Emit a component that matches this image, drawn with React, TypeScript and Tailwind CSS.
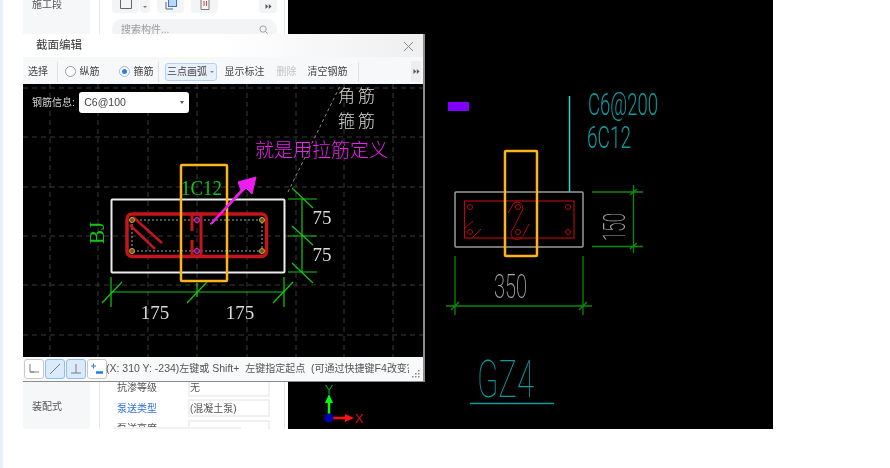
const CJK = "font-['Liberation_Sans','Noto_Sans_CJK_SC',sans-serif]";

function Chevrons() {
  return (
    <svg width="7" height="7" viewBox="0 0 7 7" fill="#555">
      <path d="M0.5 1 L3.2 3.5 L0.5 6 Z" />
      <path d="M3.8 1 L6.5 3.5 L3.8 6 Z" />
    </svg>
  );
}

function Radio({ checked, label }: { checked?: boolean; label: string }) {
  return (
    <div className="flex items-center gap-[3.5px]">
      <div className={`w-[11px] h-[11px] rounded-full border flex items-center justify-center bg-white ${checked ? "border-[#9dbbe0]" : "border-[#9a9a9a]"}`}>
        {checked && <div className="w-[5px] h-[5px] rounded-full bg-[#2f7de1]" />}
      </div>
      <span>{label}</span>
    </div>
  );
}

function Sep() {
  return <div className="w-px h-[20px] bg-[#dfe1e4]" />;
}

function GridLines({ xs, ys, x0, x1, y0, y1 }: { xs: number[]; ys: number[]; x0: number; x1: number; y0: number; y1: number }) {
  return (
    <g stroke="#3a3a3a" strokeWidth="1" strokeDasharray="5 4">
      {xs.map((x) => <line key={"x" + x} x1={x} x2={x} y1={y0} y2={y1} />)}
      {ys.map((y) => <line key={"y" + y} y1={y} y2={y} x1={x0} x2={x1} />)}
    </g>
  );
}

function DialogDrawing() {
  return (
    <svg className="absolute inset-0" width="401" height="273" viewBox="23 84 401 273">
      <GridLines xs={[50, 98, 148, 197, 247, 296, 344, 393]} ys={[88, 137, 187, 236, 285, 335]} x0={23} x1={424} y0={84} y1={357} />
      <line x1="288" y1="192" x2="340" y2="86" stroke="#8a8a8a" strokeDasharray="3 3" />
      <text x="338" y="102" fontSize="17" fill="#d8d8d8" letterSpacing="3" fontFamily="'Noto Sans CJK SC'" fontWeight="300">角筋</text>
      <text x="338" y="127" fontSize="17" fill="#d8d8d8" letterSpacing="3" fontFamily="'Noto Sans CJK SC'" fontWeight="300">箍筋</text>
      <text x="255" y="157" fontSize="19" fill="#f01ef0" fontFamily="'Noto Sans CJK SC'" fontWeight="300">就是用拉筋定义</text>

      <rect x="111.5" y="199.5" width="173" height="73" rx="1" fill="none" stroke="#ececec" strokeWidth="2" />
      <rect x="127" y="214" width="139.5" height="42.5" rx="5" fill="none" stroke="#c4141c" strokeWidth="3.5" />
      <rect x="132" y="220" width="130" height="31" fill="none" stroke="#9aa7b5" strokeWidth="1" strokeDasharray="2 2" />
      <line x1="133" y1="217" x2="162" y2="243" stroke="#c4141c" strokeWidth="2.5" />
      <line x1="130" y1="225" x2="155" y2="249" stroke="#c4141c" strokeWidth="2.5" />
      <path d="M192 213 V231 M192 240 V257 M201 213 V257" fill="none" stroke="#c4141c" strokeWidth="3" />
      <path d="M192 214 H201 M192 256 H201" fill="none" stroke="#c4141c" strokeWidth="3" />
      {[[132, 220], [262, 220], [132, 251], [262, 251]].map(([x, y]) => (
        <circle key={`${x}-${y}`} cx={x} cy={y} r="2.5" fill="#6b5a10" stroke="#c9a93a" strokeWidth="1" />
      ))}
      {[[197, 220], [197, 251]].map(([x, y]) => (
        <circle key={`${x}-${y}`} cx={x} cy={y} r="2.5" fill="#5a1060" stroke="#c040c0" strokeWidth="1" />
      ))}

      <text x="181" y="195" fontSize="21" fill="#12c812" fontFamily="'Liberation Serif'" textLength="41" lengthAdjust="spacingAndGlyphs">1C12</text>
      <rect x="181" y="165" width="46" height="116" rx="1" fill="none" stroke="#fdb515" strokeWidth="2.5" />
      <polygon points="210,224 241,190 238,182 256,177 252,194 246,188 212,224" fill="#ee1cee" stroke="#ee1cee" strokeWidth="1" strokeLinejoin="round" />

      <text transform="translate(104 233) rotate(-90)" textAnchor="middle" fontSize="21" fill="#12c812" fontFamily="'Liberation Serif'">BJ</text>

      <g stroke="#14c814" strokeWidth="1.2" fill="none">
        <path d="M111 277 V307 M197 283 V297 M284 277 V307 M111 292 H284" />
        <path d="M102 303 L122 282 M187 303 L207 282 M273 303 L293 282" />
        <path d="M302 199 V273 M288 199 H317 M288 236 H317 M288 272 H317" />
        <path d="M292 188 L313 208 M292 226 L313 245 M292 263 L313 283" />
      </g>
      <g fontSize="19" fill="#dcdcdc" fontFamily="'Liberation Serif'" textAnchor="middle">
        <text x="155" y="319">175</text>
        <text x="240" y="319">175</text>
        <text x="322" y="224">75</text>
        <text x="322" y="261">75</text>
      </g>
    </svg>
  );
}

function MainDrawing() {
  const teal = "#0c9ba0";
  const cad = "Roboto";
  return (
    <svg className="absolute inset-0" width="485" height="429" viewBox="288 0 485 429">
      <rect x="448" y="102" width="21" height="9" fill="#8000ff" />
      <line x1="569.5" y1="96" x2="569.5" y2="192" stroke="#35d0d0" strokeWidth="1.5" />
      <text x="588" y="115" fontSize="31" fill={teal} fontFamily={cad} fontWeight="300" textLength="70" lengthAdjust="spacingAndGlyphs">C6@200</text>
      <text x="587" y="148" fontSize="31" fill={teal} fontFamily={cad} fontWeight="300" textLength="44" lengthAdjust="spacingAndGlyphs">6C12</text>

      <rect x="455" y="192" width="128" height="55" rx="1" fill="none" stroke="#9a9a9a" strokeWidth="1.5" />
      <rect x="464.5" y="201" width="109.5" height="37" fill="none" stroke="#b00c0c" strokeWidth="1.2" />
      {[[470, 207], [568, 207], [470, 232], [568, 232], [518, 207], [518, 232]].map(([x, y]) => (
        <circle key={`${x}-${y}`} cx={x} cy={y} r="2.5" fill="none" stroke="#b00c0c" />
      ))}
      <path d="M464 229 L473 221 M473 237 L481 229" stroke="#b00c0c" fill="none" />
      <path d="M508 213 L514 203 A6 6 0 0 1 523 209 L513 229 A6 6 0 0 0 521 238 A8 8 0 0 0 524 234 L529 224" stroke="#b00c0c" fill="none" />
      <rect x="505" y="151" width="32" height="105" rx="1" fill="none" stroke="#fdb515" strokeWidth="2.5" />

      <g stroke="#0a8a0a" fill="none" strokeWidth="1.3">
        <path d="M633.5 185 V253 M592 192 H643 M592 246.5 H643 M630 195 L637 189 M630 249 L637 243" />
        <path d="M446 306 H592 M455 256 V315 M583 256 V315 M451 310 L459 302 M579 310 L587 302" />
      </g>
      <text transform="translate(625 241) rotate(-90)" fontSize="31" fill="#a8a8a8" fontFamily={cad} fontWeight="200" textLength="28" lengthAdjust="spacingAndGlyphs">150</text>
      <text x="494" y="298" fontSize="33" fill="#a8a8a8" fontFamily={cad} fontWeight="200" textLength="33" lengthAdjust="spacingAndGlyphs">350</text>

      <text x="477" y="397" fontSize="52" fill={teal} fontFamily={cad} fontWeight="100" textLength="57" lengthAdjust="spacingAndGlyphs">GZ4</text>
      <line x1="470" y1="403.5" x2="554" y2="403.5" stroke={teal} strokeWidth="1.3" />

      <line x1="329" y1="418" x2="329" y2="400" stroke="#00ff00" strokeWidth="2.5" />
      <polygon points="329,394 333,403 325,403" fill="#00ff00" />
      <text x="329" y="394" textAnchor="middle" fontSize="13" fill="#0c9a0c" fontFamily="'Liberation Sans'">Y</text>
      <line x1="329" y1="418" x2="346" y2="418" stroke="#ff1010" strokeWidth="2.5" />
      <polygon points="354,418 345,414 345,422" fill="#ff1010" />
      <text x="355" y="423" fontSize="13" fill="#e01010" fontFamily="'Liberation Sans'">X</text>
      <circle cx="329" cy="418" r="4.5" fill="#0000b0" />
    </svg>
  );
}

function StatusButton({ active, children }: { active?: boolean; children: React.ReactNode }) {
  return (
    <div className={`w-[20px] h-[20px] rounded-[3px] border flex items-center justify-center ${active ? "bg-[#dcebfb] border-[#8fbdf0]" : "bg-white border-[#c8c8c8]"}`}>
      <svg width="14" height="14" viewBox="0 0 14 14" fill="none" stroke="#7a7a7a">{children}</svg>
    </div>
  );
}

function Dialog() {
  return (
    <div className={`absolute left-[23px] top-[34px] w-[402px] h-[348px] flex flex-col bg-white border-r-2 border-b border-[#8c8c8c] ${CJK}`}>
      <div className="h-[23px] pt-px flex items-center justify-between pl-[13px] pr-[9px] bg-gradient-to-r from-white via-white to-[#efefef] text-[11.5px] text-[#333]">
        <span>截面编辑</span>
        <svg width="11" height="11" viewBox="0 0 11 11" stroke="#8a8a8a" strokeWidth="1"><path d="M1 1 L10 10 M10 1 L1 10" /></svg>
      </div>
      <div className="h-[27px] pt-[2px] flex items-center bg-[#f7f8fa] pl-[5px] pr-[2px] text-[10px] text-[#444]">
        <span>选择</span>
        <div className="ml-[9px]"><Sep /></div>
        <div className="ml-[7px]"><Radio label="纵筋" /></div>
        <div className="ml-[19.5px]"><Radio checked label="箍筋" /></div>
        <div className="ml-[4px]"><Sep /></div>
        <div className="ml-[6px] w-[52px] h-[18px] flex items-center justify-center gap-[3px] rounded-[3px] bg-[#e8f1fb] border border-[#b3d3f6]">
          <span>三点画弧</span>
          <span className="w-0 h-0 border-x-[2px] border-x-transparent border-t-[2px] border-t-[#888]" />
        </div>
        <span className="ml-[8px]">显示标注</span>
        <span className="ml-[12px] text-[#c4c4c4]">删除</span>
        <span className="ml-[11px]">清空钢筋</span>
        <div className="ml-[10px]"><Sep /></div>
        <div className="ml-auto w-[10px] h-[21px] rounded-[2px] bg-[#eceef0] flex items-center justify-center"><Chevrons /></div>
      </div>
      <div className="relative h-[273px] bg-black overflow-hidden">
        <DialogDrawing />
        <div className="relative flex items-center mt-[8px] ml-[9px] gap-[4.5px] text-[10px] text-[#d0d0d0]">
          <span>钢筋信息:</span>
          <div className="w-[110px] h-[21px] rounded-[3px] bg-white flex items-center justify-between pl-[5px] pr-[5px] text-[10.5px] text-[#444]">
            <span>C6@100</span>
            <span className="w-0 h-0 border-x-[2.5px] border-x-transparent border-t-[3px] border-t-[#555]" />
          </div>
        </div>
      </div>
      <div className="flex-1 flex items-center bg-[#f8f9fa] pl-[1px] pr-[3px] text-[10px] text-[#555]">
        <div className="flex gap-px shrink-0">
          <StatusButton><path d="M3 2 V10 H7 M3 10 H12" /></StatusButton>
          <StatusButton active><path d="M2 12 L12 2" /></StatusButton>
          <StatusButton active><path d="M7 2 V11 M2 11 H12" /></StatusButton>
          <StatusButton><path d="M1 4 H6 M3.5 1.5 V6.5" stroke="#1d7fe0" /><path d="M6 10.5 H13" stroke="#1d7fe0" strokeWidth="2.5" /></StatusButton>
        </div>
        <div className="-ml-[1px] w-[303px] overflow-hidden whitespace-pre shrink-0">
          <span className="text-[10.5px]">(X: 310 Y: -234)</span>左键或<span className="text-[10.5px]"> Shift+  </span>左键指定起点<span className="text-[10.5px]">  (</span>可通过快捷键<span className="text-[10.5px]">F4</span>改变割线方向)
        </div>
        <svg className="ml-auto self-end mb-[3px]" width="8" height="8" viewBox="0 0 8 8" fill="#888">
          <rect x="6" y="0" width="1.5" height="1.5" /><rect x="3" y="3" width="1.5" height="1.5" /><rect x="6" y="3" width="1.5" height="1.5" />
          <rect x="0" y="6" width="1.5" height="1.5" /><rect x="3" y="6" width="1.5" height="1.5" /><rect x="6" y="6" width="1.5" height="1.5" />
        </svg>
      </div>
    </div>
  );
}

function FormRow({ label, value, blue }: { label: string; value: string; blue?: boolean }) {
  return (
    <div className="flex items-center h-[20.5px]">
      <span className={`w-[71px] ${blue ? "text-[#2f74d8]" : "text-[#555]"}`}>{label}</span>
      <div className="w-[82px] h-[18px] border-2 border-[#eef0f2] flex items-center text-[#555]">{value}</div>
    </div>
  );
}

function ToolButton({ className, children }: { className: string; children: React.ReactNode }) {
  return <div className={`h-[13px] bg-[#f3f4f6] rounded-b-[4px] flex justify-center ${className}`}>{children}</div>;
}

export default function App() {
  return (
    <div className={`relative w-[890px] h-[468px] bg-white overflow-hidden blur-[0.45px] ${CJK}`}>
      <div className="absolute left-0 top-0 w-[3px] h-full bg-[#eaf0f8]" />
      <div className="ml-[23px] w-[750px] h-[429px] flex">
        <div className="w-[67px] bg-[#f6f7f9] flex flex-col justify-between pl-[9px] pb-[15px] text-[10px] text-[#555]">
          <span className="-mt-[3px]">施工段</span>
          <span>装配式</span>
        </div>
        <div className="w-[9px] bg-white" />
        <div className="relative w-[186px] border-x border-[#e4e6e8] bg-white flex flex-col justify-between pl-[12px] pr-[7px] text-[10px] overflow-hidden">
          <div className="flex flex-col gap-[6px]">
            <div className="flex items-start h-[13px]">
              <ToolButton className="w-[27px]">
                <svg width="14" height="10" viewBox="0 0 14 10" fill="none" stroke="#666"><path d="M1.5 0 V8.5 H12.5 V0" /></svg>
              </ToolButton>
              <ToolButton className="ml-px w-[10px] items-center">
                <span className="w-0 h-0 border-x-[2px] border-x-transparent border-t-[2px] border-t-[#777]" />
              </ToolButton>
              <ToolButton className="ml-[7px] w-[27px]">
                <svg width="14" height="10" viewBox="0 0 14 10" fill="none">
                  <path d="M2 2 V9 H9" stroke="#666" />
                  <rect x="4.5" y="-2" width="8" height="8.5" fill="#bcd6f7" stroke="#2f74d8" />
                </svg>
              </ToolButton>
              <ToolButton className="ml-[7px] w-[27px]">
                <svg width="12" height="10" viewBox="0 0 12 10" fill="none">
                  <path d="M2 0 V9.5 H10 V0" stroke="#777" />
                  <path d="M5 1 V6 M7.5 1 V6" stroke="#e03c3c" />
                </svg>
              </ToolButton>
              <ToolButton className="ml-auto w-[18px] items-center"><Chevrons /></ToolButton>
            </div>
            <div className="h-[21px] rounded-[10px] bg-[#f3f4f6] flex items-center justify-between px-[9px] text-[#999]">
              <span>搜索构件...</span>
              <svg width="9" height="9" viewBox="0 0 10 10" fill="none" stroke="#999"><circle cx="4.5" cy="4.5" r="3.5" /><path d="M7 7 L9.5 9.5" /></svg>
            </div>
          </div>
          <div className="-mb-[10px] pl-[5px]">
            <FormRow label="抗渗等级" value="无" />
            <FormRow label="泵送类型" value="(混凝土泵)" blue />
            <FormRow label="泵送高度" value="" />
          </div>
          <div className="absolute left-[14px] bottom-0 w-[127px] h-[2px] bg-[#f0f1f3]" />
        </div>
        <div className="w-[3px] bg-white" />
        <div className="relative flex-1 bg-black overflow-hidden">
          <MainDrawing />
        </div>
      </div>
      <Dialog />
    </div>
  );
}
